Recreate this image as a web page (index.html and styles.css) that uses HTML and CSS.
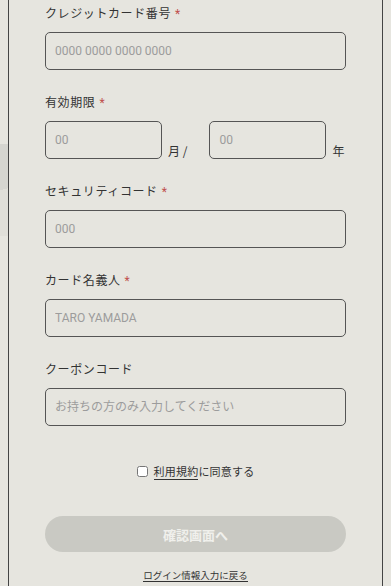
FILE: index.html
```html
<!DOCTYPE html>
<html lang="ja">
<head>
    <meta charset="UTF-8">
    <meta name="viewport" content="width=device-width, initial-scale=1.0">
    <title>お支払い情報入力</title>
    <link rel="stylesheet" href="styles.css">
</head>
<body>

<div class="page">
    <div class="backdrop"></div>
    <div class="card">
        <form id="payment-form">
            <div class="form-group">
                <label for="card-number">クレジットカード番号<span class="req">*</span></label>
                <input type="text" id="card-number" placeholder="0000 0000 0000 0000" />
            </div>
            <div class="form-group">
                <label for="exp-month">有効期限<span class="req">*</span></label>
                <div class="expiry">
                    <div class="expiry-item">
                        <input type="text" id="exp-month" placeholder="00" />
                        <span class="unit">月 /</span>
                    </div>
                    <div class="expiry-item">
                        <input type="text" id="exp-year" placeholder="00" />
                        <span class="unit">年</span>
                    </div>
                </div>
            </div>
            <div class="form-group">
                <label for="cvc">セキュリティコード<span class="req">*</span></label>
                <input type="text" id="cvc" placeholder="000" />
            </div>
            <div class="form-group">
                <label for="holder">カード名義人<span class="req">*</span></label>
                <input type="text" id="holder" placeholder="TARO YAMADA" />
            </div>
            <div class="form-group">
                <label for="coupon">クーポンコード</label>
                <input type="text" id="coupon" placeholder="お持ちの方のみ入力してください" />
            </div>

            <div class="agree">
                <input type="checkbox" id="agree" />
                <label for="agree"><a href="#" class="terms">利用規約</a>に同意する</label>
            </div>

            <button type="button" id="confirm-btn" disabled>確認画面へ</button>
        </form>
        <div class="back">
            <a href="#">ログイン情報入力に戻る</a>
        </div>
    </div>
</div>

</body>
</html>
```

FILE: styles.css
```css
body {
    margin: 0;
    background-color: #e6e5df;
    font-family: Roboto, "Noto Sans CJK JP", sans-serif;
    color: #333;
}

.page {
    position: relative;
    padding: 0 8px;
    overflow: hidden;
}

/* grey shape peeking out from behind the card */
.backdrop {
    position: absolute;
    left: -60px;
    top: 144px;
    width: 80px;
    height: 92px;
    background: linear-gradient(165deg, #d5d5d0 55%, #e0dfd9 55%);
}

.card {
    position: relative;
    background-color: #e6e5df;
    border-left: 1px solid #444;
    border-right: 1px solid #444;
    padding: 5px 36px 3px;
}

.form-group {
    margin-bottom: 24px;
}

.form-group > label {
    display: block;
    margin-bottom: 9px;
    font-size: 12px;
    line-height: 18px;
    letter-spacing: 0.05em;
    color: #333;
}

.req {
    color: #c0504d;
    margin-left: 4px;
}

input[type="text"] {
    display: block;
    width: 100%;
    height: 38px;
    padding: 0 9px;
    border: 1px solid #555;
    border-radius: 5px;
    background-color: transparent;
    color: #333;
    font-family: Roboto, "Noto Sans CJK JP", sans-serif;
    font-size: 12px;
    box-sizing: border-box;
}

input::placeholder {
    color: #9c9c9c;
}

input[type="text"]:focus {
    outline: none;
    border-color: #222;
}

.expiry {
    display: flex;
    gap: 22px;
}

.expiry-item {
    display: flex;
    align-items: flex-end;
}

.expiry-item input[type="text"] {
    width: 117px;
    align-self: flex-start;
}

.unit {
    margin-left: 6px;
    font-family: "Noto Sans CJK JP", sans-serif;
    font-size: 12px;
    line-height: 18px;
    margin-bottom: -1px;
}

.agree {
    display: flex;
    justify-content: center;
    align-items: center;
    margin-top: 36px;
    height: 18px;
    font-size: 11px;
    letter-spacing: 0.02em;
}

.agree input {
    width: 11px;
    height: 11px;
    margin: 0 6px 0 0;
}

.terms {
    color: #333;
    text-decoration: none;
    border-bottom: 1px solid #333;
}

button {
    display: block;
    width: 100%;
    height: 36px;
    margin-top: 36px;
    border: none;
    border-radius: 18px;
    background-color: #c9c9c3;
    color: #f0f0ec;
    font-family: "Noto Sans CJK JP", sans-serif;
    font-size: 13px;
    font-weight: bold;
    cursor: pointer;
}

button:disabled {
    cursor: not-allowed;
}

.back {
    margin-top: 17px;
    text-align: center;
    font-size: 9.5px;
    line-height: 14px;
}

.back a {
    color: #333;
    text-decoration: none;
    border-bottom: 1px solid #333;
}
```
